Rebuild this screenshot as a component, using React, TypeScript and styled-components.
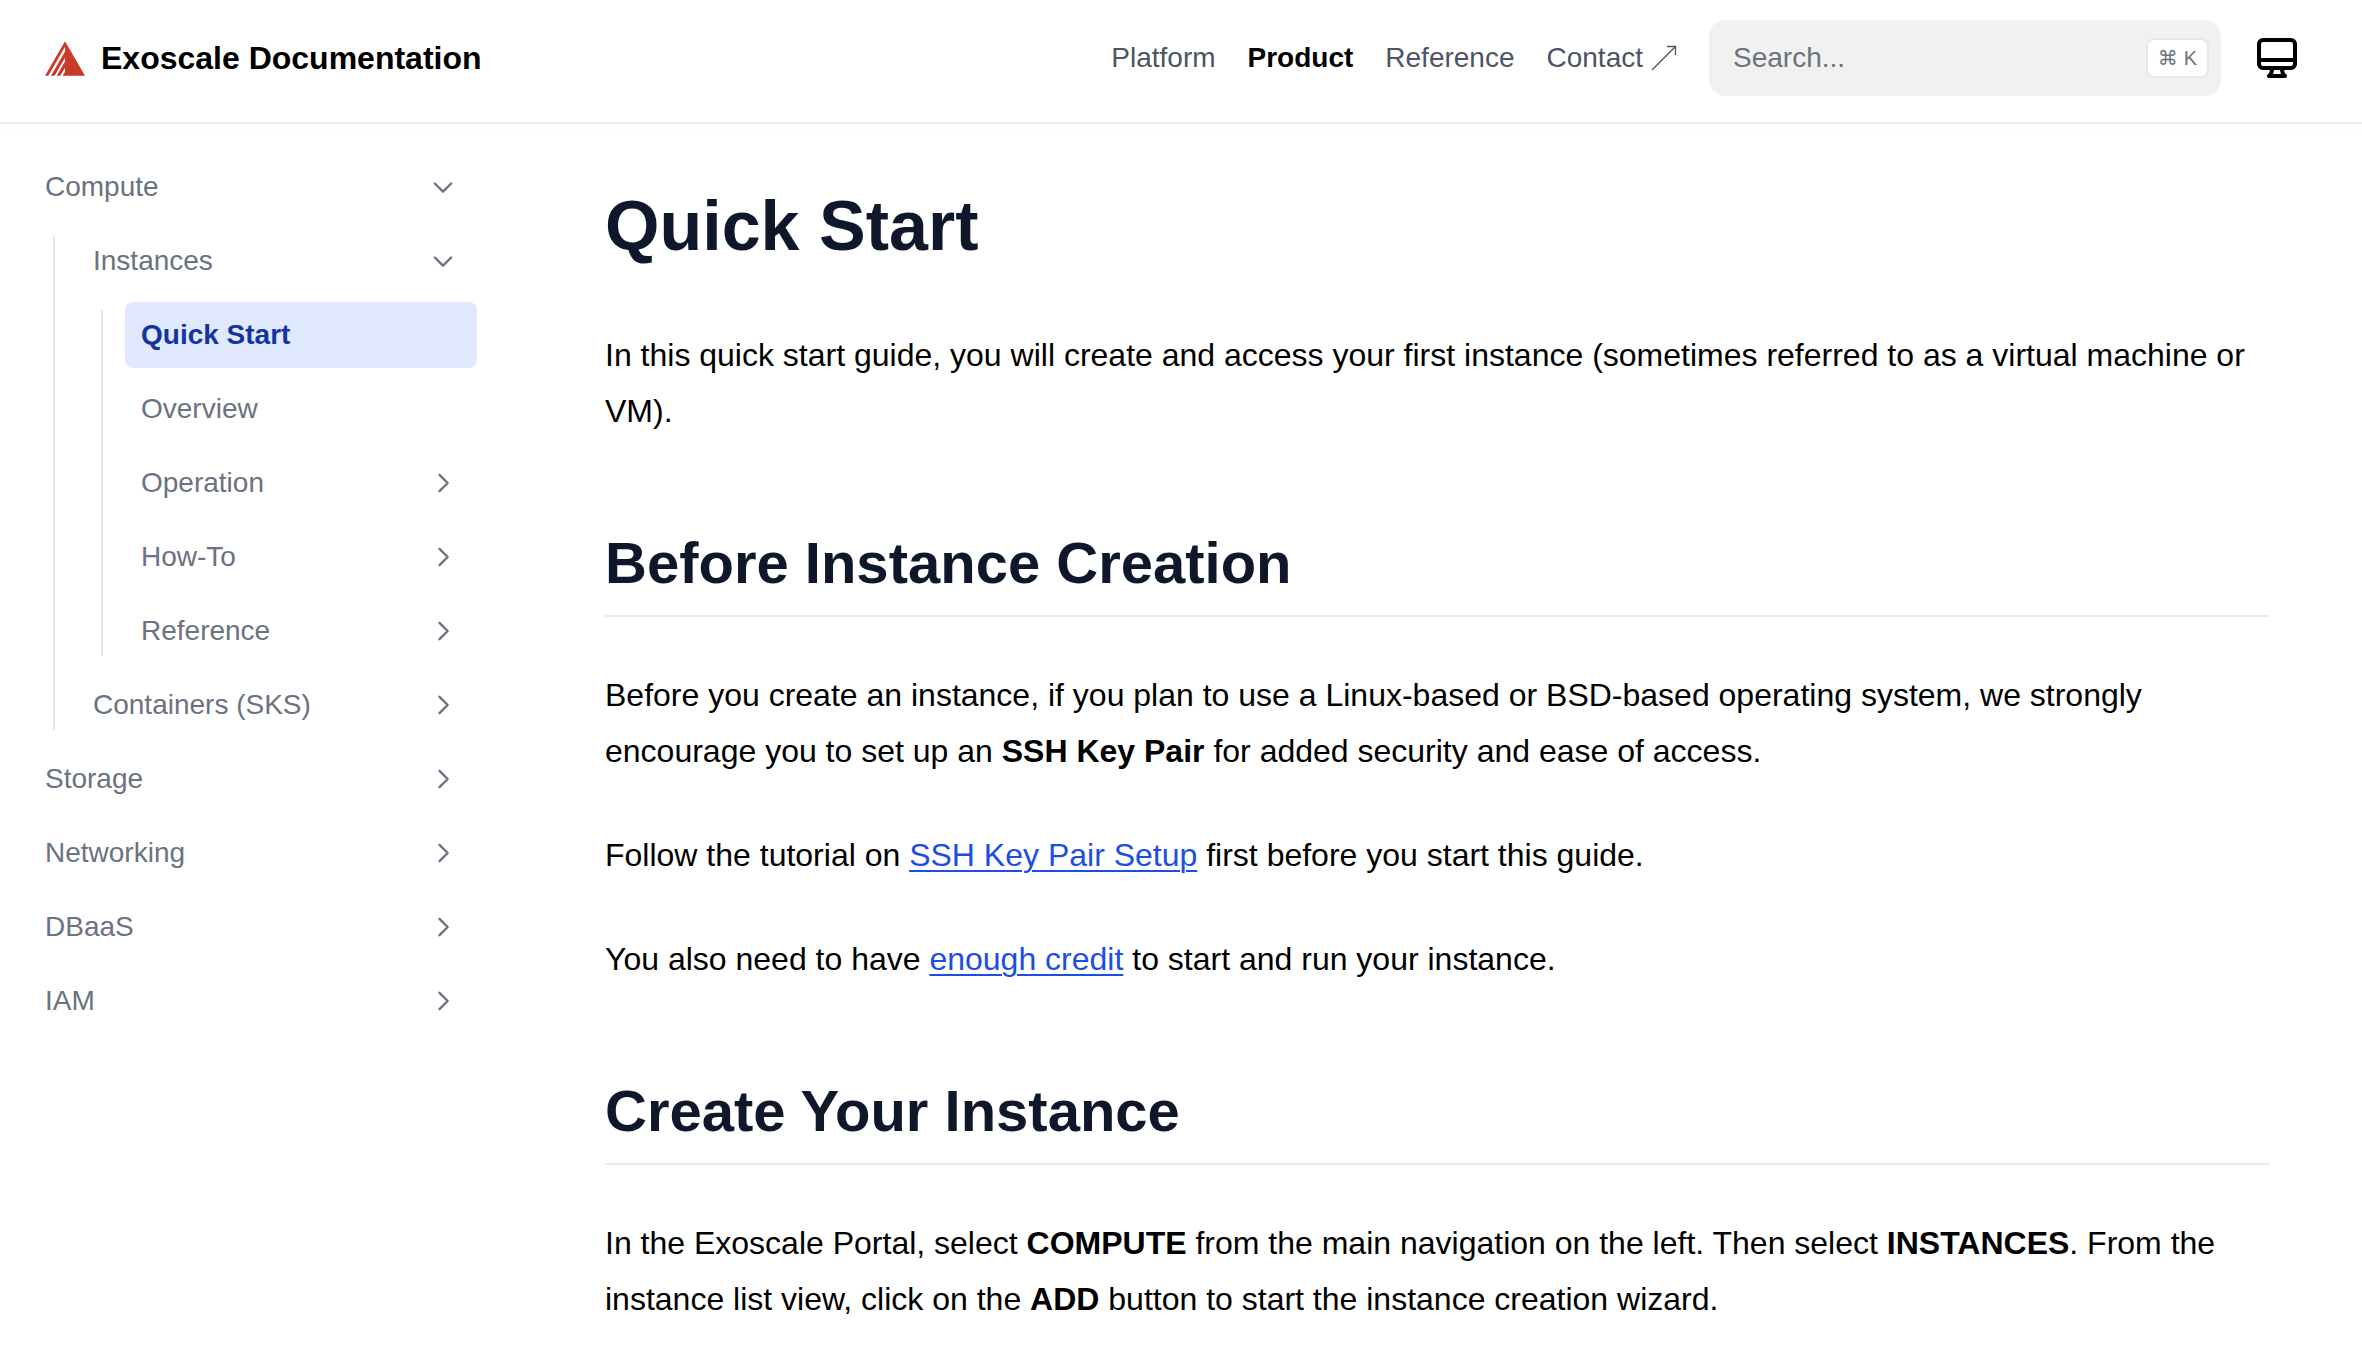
import React from "react";
import styled, { createGlobalStyle, css } from "styled-components";

const color = {
  ink: "#000000",
  heading: "#0f172a",
  nav: "#4b5563",
  muted: "#6b7280",
  line: "#e5e7eb",
  rule: "#ebebeb",
  field: "#f1f1f1",
  link: "#1d4ee4",
  activeText: "#1434a0",
  activeBg: "#e0e9fd",
  brand: "#c83b2b",
};

const GlobalStyle = createGlobalStyle`
  *, *::before, *::after { box-sizing: border-box; }
  body {
    margin: 0;
    background: #fff;
    color: ${color.ink};
    font-family: "Liberation Sans", Arial, Helvetica, sans-serif;
    font-size: 32px;
    line-height: 56px;
  }
  a { color: inherit; text-decoration: none; }
  svg { display: block; flex-shrink: 0; }
`;

const Header = styled.header`
  display: flex;
  align-items: center;
  gap: 32px;
  padding: 20px 61px 26px 45px;
  border-bottom: 2px solid ${color.rule};
  box-shadow: 0 4px 8px rgba(0, 0, 0, 0.02);
`;

const Brand = styled.a`
  display: flex;
  align-items: center;
  gap: 16px;
  margin-right: auto;
  font-weight: 700;
  white-space: nowrap;
`;

const Nav = styled.nav`
  display: flex;
  align-items: center;
  gap: 32px;
`;

const NavLink = styled.a<{ $active?: boolean }>`
  display: flex;
  align-items: center;
  gap: 8px;
  font-size: 28px;
  white-space: nowrap;
  color: ${(p) => (p.$active ? color.ink : color.nav)};
  font-weight: ${(p) => (p.$active ? 700 : 400)};
`;

const SearchBox = styled.label`
  display: flex;
  align-items: center;
  width: 512px;
  height: 76px;
  padding: 0 12px 0 24px;
  border-radius: 16px;
  background: ${color.field};
`;

const SearchInput = styled.input`
  flex: 1;
  min-width: 0;
  padding: 0;
  border: 0;
  outline: 0;
  background: transparent;
  color: ${color.ink};
  font-family: inherit;
  font-size: 28px;
  &::placeholder { color: ${color.muted}; opacity: 1; }
`;

const Shortcut = styled.kbd`
  display: flex;
  align-items: center;
  justify-content: center;
  gap: 6px;
  height: 40px;
  padding: 0 10px;
  border: 2px solid ${color.line};
  border-radius: 8px;
  background: #fff;
  color: ${color.muted};
  font-family: "Liberation Sans", "DejaVu Sans", sans-serif;
  font-size: 20px;
  line-height: 36px;
`;

const ThemeButton = styled.button`
  padding: 0;
  border: 0;
  background: none;
  color: ${color.ink};
  cursor: pointer;
`;

const Layout = styled.div`
  display: flex;
  align-items: flex-start;
`;

const Sidebar = styled.nav`
  flex: 0 0 512px;
  padding: 30px 35px 30px 29px;
`;

const List = styled.ul<{ $nested?: boolean }>`
  display: flex;
  flex-direction: column;
  gap: 8px;
  margin: 0;
  padding: 0;
  list-style: none;
  ${(p) =>
    p.$nested &&
    css`
      margin: 8px 0 0 24px;
      padding-left: 24px;
      background: linear-gradient(${color.line}, ${color.line}) left center / 2px
        calc(100% - 16px) no-repeat;
    `}
`;

const ItemLink = styled.a<{ $active?: boolean }>`
  display: flex;
  align-items: center;
  justify-content: space-between;
  padding: 0 20px 0 16px;
  border-radius: 8px;
  font-size: 28px;
  line-height: 66px;
  color: ${(p) => (p.$active ? color.activeText : color.muted)};
  font-weight: ${(p) => (p.$active ? 700 : 400)};
  background: ${(p) => (p.$active ? color.activeBg : "transparent")};
`;

const Chevron = styled.svg<{ $open?: boolean }>`
  width: 28px;
  height: 28px;
  transform: ${(p) => (p.$open ? "rotate(90deg)" : "none")};
`;

const Article = styled.main`
  flex: 1;
  min-width: 0;
  padding: 60px 93px 40px;
`;

const Title = styled.h1`
  margin: 0 0 59px;
  color: ${color.heading};
  font-size: 70px;
  line-height: 84px;
`;

const SectionTitle = styled.h2`
  margin: 88px 0 50px;
  padding-bottom: 16px;
  border-bottom: 2px solid ${color.rule};
  color: ${color.heading};
  font-size: 58px;
  line-height: 72px;
`;

const Paragraph = styled.p`
  margin: 0;
  & + & { margin-top: 48px; }
`;

const TextLink = styled.a`
  color: ${color.link};
  text-decoration: underline;
  text-decoration-thickness: 2px;
  text-underline-offset: 4px;
`;

const Logo = () => (
  <svg width="40" height="35" viewBox="0 0 120 104" fill={color.brand} aria-hidden="true">
    <path d="M60 0 120 104H53L60 92Z" />
    <path d="M60 0V17L10 104H0Z" />
    <path d="M60 31V50L29 104H18Z" />
    <path d="M60 61V80L46 104H35Z" />
  </svg>
);

const OutArrow = () => (
  <svg width="26" height="26" viewBox="0 0 26 26" fill="none" stroke="currentColor" aria-hidden="true">
    <path d="M1 25 25 1M16 1.5H24.5V10" strokeWidth="1.3" />
  </svg>
);

const Monitor = () => (
  <svg
    width="48"
    height="48"
    viewBox="0 0 24 24"
    fill="none"
    stroke="currentColor"
    strokeWidth="2"
    strokeLinecap="round"
    strokeLinejoin="round"
    aria-hidden="true"
  >
    <path d="M9.75 17L9 20l-1 1h8l-1-1-.75-3M3 13h18M5 17h14a2 2 0 002-2V5a2 2 0 00-2-2H5a2 2 0 00-2 2v10a2 2 0 002 2z" />
  </svg>
);

type Entry = {
  label: string;
  active?: boolean;
  expandable?: boolean;
  children?: Entry[];
};

const tree: Entry[] = [
  {
    label: "Compute",
    children: [
      {
        label: "Instances",
        children: [
          { label: "Quick Start", active: true },
          { label: "Overview" },
          { label: "Operation", expandable: true },
          { label: "How-To", expandable: true },
          { label: "Reference", expandable: true },
        ],
      },
      { label: "Containers (SKS)", expandable: true },
    ],
  },
  { label: "Storage", expandable: true },
  { label: "Networking", expandable: true },
  { label: "DBaaS", expandable: true },
  { label: "IAM", expandable: true },
];

const Tree = ({ entries, nested }: { entries: Entry[]; nested?: boolean }) => (
  <List $nested={nested}>
    {entries.map((entry) => (
      <li key={entry.label}>
        <ItemLink href="#" $active={entry.active} aria-current={entry.active ? "page" : undefined}>
          {entry.label}
          {(entry.expandable || entry.children) && (
            <Chevron
              $open={Boolean(entry.children)}
              viewBox="0 0 24 24"
              fill="none"
              stroke="currentColor"
              strokeWidth="2"
              aria-hidden="true"
            >
              <path d="M9 5l7 7-7 7" strokeLinecap="round" strokeLinejoin="round" />
            </Chevron>
          )}
        </ItemLink>
        {entry.children && <Tree entries={entry.children} nested />}
      </li>
    ))}
  </List>
);

export default function App() {
  return (
    <>
      <GlobalStyle />
      <Header>
        <Brand href="#">
          <Logo />
          Exoscale Documentation
        </Brand>
        <Nav aria-label="Main">
          <NavLink href="#">Platform</NavLink>
          <NavLink href="#" $active>Product</NavLink>
          <NavLink href="#">Reference</NavLink>
          <NavLink href="#">
            Contact
            <OutArrow />
          </NavLink>
        </Nav>
        <SearchBox>
          <SearchInput type="search" placeholder="Search..." aria-label="Search" />
          <Shortcut>
            <span>⌘</span>
            <span>K</span>
          </Shortcut>
        </SearchBox>
        <ThemeButton type="button" aria-label="Change theme">
          <Monitor />
        </ThemeButton>
      </Header>
      <Layout>
        <Sidebar aria-label="Documentation">
          <Tree entries={tree} />
        </Sidebar>
        <Article>
          <Title>Quick Start</Title>
          <Paragraph>
            In this quick start guide, you will create and access your first instance (sometimes
            referred to as a virtual machine or VM).
          </Paragraph>
          <SectionTitle>Before Instance Creation</SectionTitle>
          <Paragraph>
            Before you create an instance, if you plan to use a Linux-based or BSD-based operating
            system, we strongly encourage you to set up an <strong>SSH Key Pair</strong> for added
            security and ease of access.
          </Paragraph>
          <Paragraph>
            Follow the tutorial on <TextLink href="#">SSH Key Pair Setup</TextLink> first before you
            start this guide.
          </Paragraph>
          <Paragraph>
            You also need to have <TextLink href="#">enough credit</TextLink> to start and run your
            instance.
          </Paragraph>
          <SectionTitle>Create Your Instance</SectionTitle>
          <Paragraph>
            In the Exoscale Portal, select <strong>COMPUTE</strong> from the main navigation on the
            left. Then select <strong>INSTANCES</strong>. From the instance list view, click on the{" "}
            <strong>ADD</strong> button to start the instance creation wizard.
          </Paragraph>
        </Article>
      </Layout>
    </>
  );
}
